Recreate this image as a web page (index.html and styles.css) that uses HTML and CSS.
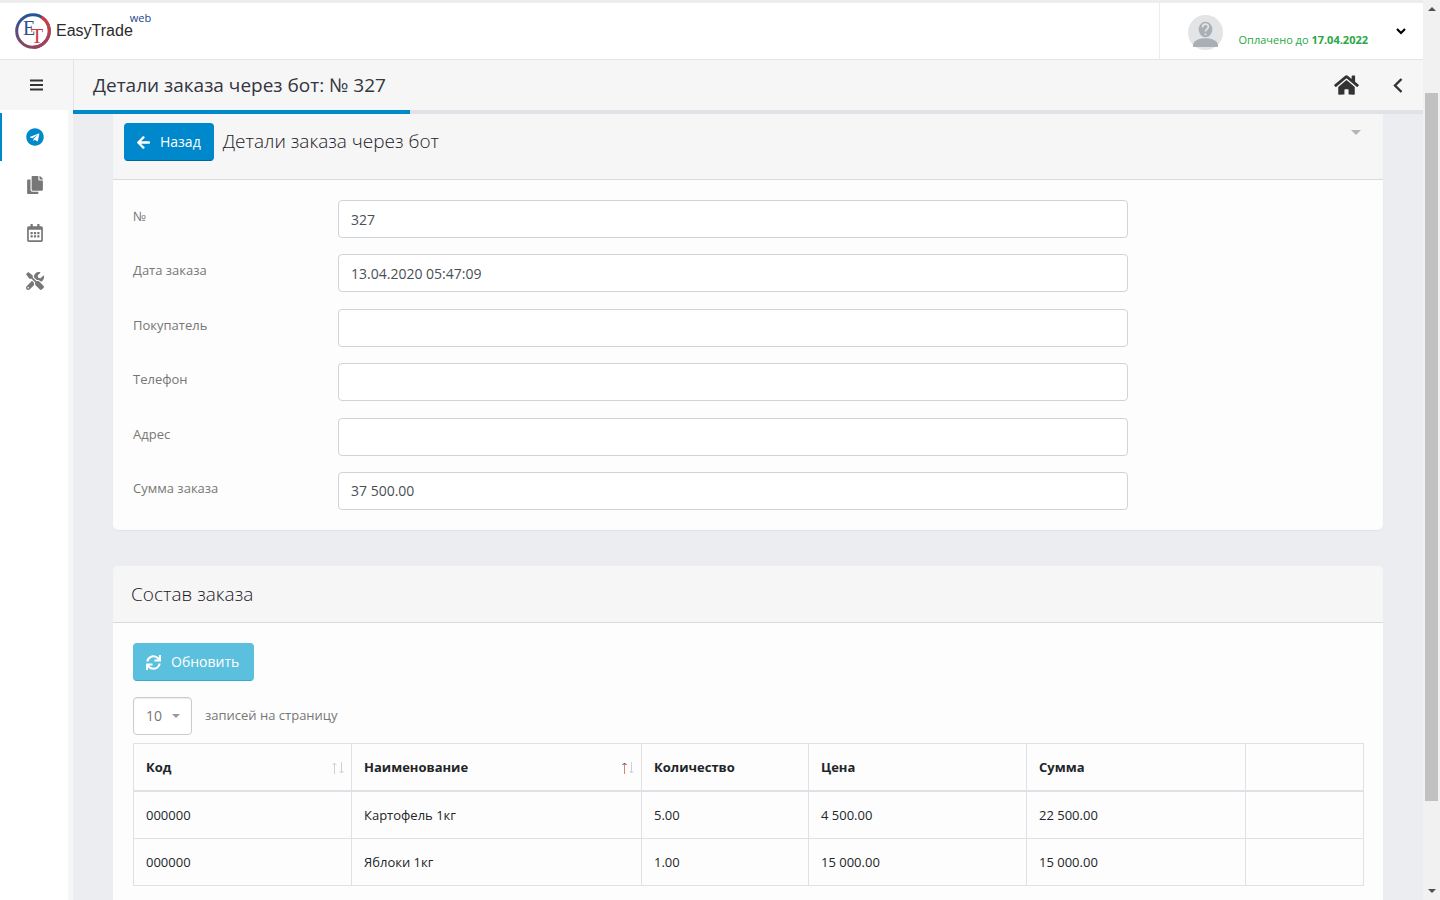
FILE: index.html
```html
<!DOCTYPE html>
<html lang="ru">
<head>
<meta charset="utf-8">
<title>EasyTrade web</title>
<link rel="stylesheet" href="styles.css">
</head>
<body>
<div class="app">
  <header class="topbar">
    <a class="logo" href="#">
      <svg class="logo-mark" viewBox="0 0 36 36" aria-hidden="true">
        <defs>
          <linearGradient id="ring" x1="0" y1="0" x2="0" y2="1">
            <stop offset="0" stop-color="#24549a"/>
            <stop offset="1" stop-color="#8c4560"/>
          </linearGradient>
          <linearGradient id="ringRed" x1="0" y1="0" x2="0" y2="1">
            <stop offset="0" stop-color="#d93b3b"/>
            <stop offset="1" stop-color="#94435c"/>
          </linearGradient>
        </defs>
        <circle cx="18" cy="18" r="16.300" fill="#fff" stroke="url(#ring)" stroke-width="3"/>
        <path d="M26.500 4.100A16.300 16.300 0 0 1 18 34.300" fill="none" stroke="url(#ringRed)" stroke-width="3"/>
        <text class="logo-e" x="8" y="22">E</text>
        <text class="logo-t" x="16" y="30">T</text>
      </svg>
      <span class="logo-name">EasyTrade</span>
      <span class="logo-web">web</span>
    </a>
    <div class="account">
      <svg class="avatar" viewBox="0 0 36 36" aria-hidden="true">
        <circle cx="18" cy="18" r="18" fill="#e2e4e6"/>
        <path d="M5 32C5 26.500 11 24 18 24s13 2.500 13 8q0 1-1 1H6q-1 0-1-1z" fill="#a9b0b5"/>
        <ellipse cx="18" cy="15" rx="7" ry="8" fill="#a9b0b5"/>
        <path d="M15 12.500c0-4 6-4 6-.5 0 2.500-3 2.500-3 5M18 19v1.500" fill="none" stroke="#e2e4e6" stroke-width="1.800"/>
      </svg>
      <span class="paid">Оплачено до <b>17.04.2022</b></span>
      <button class="icon-button account-toggle" aria-label="Меню пользователя">
        <svg viewBox="0 0 10 7" width="10" height="7"><path d="M1 1l4 4 4-4" fill="none" stroke="#000" stroke-width="2.200"/></svg>
      </button>
    </div>
  </header>

  <div class="pagehead">
    <button class="icon-button menu-toggle" aria-label="Меню">
      <svg viewBox="0 0 13 12" width="13" height="12"><path d="M0 1.500h13M0 6h13M0 10.500h13" stroke="#333" stroke-width="1.800"/></svg>
    </button>
    <div class="pagehead-main">
      <h1>Детали заказа через бот: № 327</h1>
      <a class="home" href="#" aria-label="Главная">
        <svg viewBox="0 0 576 512" width="25" height="22"><path d="M280.370 148.260L96 300.110V464a16 16 0 0 0 16 16l112.060-.290a16 16 0 0 0 15.920-16V368a16 16 0 0 1 16-16h64a16 16 0 0 1 16 16v95.640a16 16 0 0 0 16 16.050L464 480a16 16 0 0 0 16-16V300L295.670 148.260a12.190 12.190 0 0 0-15.300 0zM571.600 251.470L488 182.560V44.050a12 12 0 0 0-12-12h-56a12 12 0 0 0-12 12v72.610L318.470 43a48 48 0 0 0-61 0L4.340 251.470a12 12 0 0 0-1.600 16.900l25.500 31A12 12 0 0 0 45.150 301l235.220-193.740a12.190 12.190 0 0 1 15.300 0L530.900 301a12 12 0 0 0 16.900-1.600l25.500-31a12 12 0 0 0-1.700-16.930z"/></svg>
      </a>
      <button class="icon-button panel-toggle" aria-label="Открыть панель">
        <svg viewBox="0 0 10 16" width="10" height="16"><path d="M8.500 2L2 8.500 8.500 15" fill="none" stroke="#333" stroke-width="2.400"/></svg>
      </button>
    </div>
  </div>

  <div class="body">
    <nav class="sidebar" aria-label="Разделы">
      <a class="nav-item active" href="#" aria-label="Telegram">
        <svg viewBox="0 0 496 512" width="18" height="18"><path d="M248 8C111 8 0 119 0 256s111 248 248 248 248-111 248-248S385 8 248 8zm121.800 169.900l-40.700 191.800c-3 13.600-11.100 16.900-22.400 10.500l-62-45.700-29.900 28.800c-3.300 3.300-6.100 6.100-12.500 6.100l4.400-63.100 114.900-103.800c5-4.400-1.100-6.900-7.700-2.500l-142 89.400-61.200-19.100c-13.300-4.200-13.600-13.300 2.800-19.700l239.100-92.200c11.100-4 20.800 2.700 17.200 19.500z"/></svg>
      </a>
      <a class="nav-item" href="#" aria-label="Документы">
        <svg viewBox="0 0 448 512" width="16" height="18"><path d="M320 448v40c0 13.255-10.745 24-24 24H24c-13.255 0-24-10.745-24-24V120c0-13.255 10.745-24 24-24h72v296c0 30.879 25.121 56 56 56h168zm0-344V0H152c-13.255 0-24 10.745-24 24v368c0 13.255 10.745 24 24 24h272c13.255 0 24-10.745 24-24V128H344c-13.200 0-24-10.800-24-24zm120.971-31.029L375.029 7.029A24 24 0 0 0 358.059 0H352v96h96v-6.059a24 24 0 0 0-7.029-16.970z"/></svg>
      </a>
      <a class="nav-item" href="#" aria-label="Календарь">
        <svg viewBox="0 0 448 512" width="16" height="18"><path d="M148 288h-40c-6.600 0-12-5.400-12-12v-40c0-6.600 5.400-12 12-12h40c6.600 0 12 5.400 12 12v40c0 6.600-5.400 12-12 12zm108-12v-40c0-6.600-5.400-12-12-12h-40c-6.600 0-12 5.400-12 12v40c0 6.600 5.400 12 12 12h40c6.600 0 12-5.400 12-12zm96 0v-40c0-6.600-5.400-12-12-12h-40c-6.600 0-12 5.400-12 12v40c0 6.600 5.400 12 12 12h40c6.600 0 12-5.400 12-12zm-96 96v-40c0-6.600-5.400-12-12-12h-40c-6.600 0-12 5.400-12 12v40c0 6.600 5.400 12 12 12h40c6.600 0 12-5.400 12-12zm-96 0v-40c0-6.600-5.400-12-12-12h-40c-6.600 0-12 5.400-12 12v40c0 6.600 5.400 12 12 12h40c6.600 0 12-5.400 12-12zm192 0v-40c0-6.600-5.400-12-12-12h-40c-6.600 0-12 5.400-12 12v40c0 6.600 5.400 12 12 12h40c6.600 0 12-5.400 12-12zm96-260v352c0 26.500-21.500 48-48 48H48c-26.500 0-48-21.500-48-48V112c0-26.500 21.500-48 48-48h48V12c0-6.600 5.400-12 12-12h40c6.600 0 12 5.400 12 12v52h128V12c0-6.600 5.400-12 12-12h40c6.600 0 12 5.400 12 12v52h48c26.500 0 48 21.500 48 48zm-48 346V160H48v298c0 3.300 2.700 6 6 6h340c3.300 0 6-2.700 6-6z"/></svg>
      </a>
      <a class="nav-item" href="#" aria-label="Настройки">
        <svg viewBox="0 0 512 512" width="18" height="18"><path d="M501.100 395.700L384 278.600c-23.100-23.100-57.600-27.600-85.400-13.900L192 158.100V96L64 0 0 64l96 128h62.100l106.600 106.600c-13.600 27.800-9.200 62.300 13.900 85.400l117.100 117.100c14.600 14.600 38.200 14.600 52.700 0l52.700-52.700c14.500-14.600 14.500-38.200 0-52.700zM331.700 225c28.300 0 54.900 11 74.900 31l19.400 19.400c15.800-6.900 30.800-16.500 43.800-29.500 37.100-37.100 49.700-89.300 37.900-136.700-2.200-9-13.500-12.100-20.100-5.500l-74.400 74.400-67.900-11.300L334 98.900l74.400-74.400c6.600-6.600 3.400-17.900-5.700-20.200-47.400-11.700-99.600.9-136.600 37.900-28.500 28.500-41.900 66.100-41.200 103.600l82.100 82.100c8.100-1.900 16.500-2.900 24.700-2.900zm-103.900 82l-56.700-56.700L18.700 402.800c-25 25-25 65.500 0 90.500s65.500 25 90.500 0l123.600-123.600c-7.600-19.900-9.900-41.600-5-62.700zM64 472c-13.200 0-24-10.800-24-24 0-13.300 10.700-24 24-24s24 10.700 24 24c0 13.200-10.700 24-24 24z"/></svg>
      </a>
    </nav>

    <main class="content">
      <section class="card card-first">
        <div class="card-head card-head-tools">
          <button class="btn btn-primary">
            <svg viewBox="0 0 448 512" width="13" height="15"><path d="M257.500 445.100l-22.200 22.200c-9.400 9.400-24.600 9.400-33.900 0L7 273c-9.400-9.400-9.400-24.600 0-33.900L201.400 44.700c9.400-9.400 24.600-9.400 33.900 0l22.200 22.200c9.500 9.500 9.300 25-.4 34.300L136.600 216H424c13.300 0 24 10.700 24 24v32c0 13.300-10.700 24-24 24H136.600l120.500 114.800c9.800 9.300 10 24.800.4 34.300z"/></svg>
            Назад
          </button>
          <h2>Детали заказа через бот</h2>
          <button class="icon-button collapse" aria-label="Свернуть"><span class="caret caret-light"></span></button>
        </div>
        <form class="order">
          <div class="field"><label for="num">№</label><input id="num" value="327"></div>
          <div class="field"><label for="date">Дата заказа</label><input id="date" value="13.04.2020 05:47:09"></div>
          <div class="field"><label for="buyer">Покупатель</label><input id="buyer"></div>
          <div class="field"><label for="phone">Телефон</label><input id="phone"></div>
          <div class="field"><label for="address">Адрес</label><input id="address"></div>
          <div class="field"><label for="sum">Сумма заказа</label><input id="sum" value="37 500.00"></div>
        </form>
      </section>

      <section class="card card-items">
        <div class="card-head"><h2>Состав заказа</h2></div>
        <div class="card-body">
          <button class="btn btn-info">
            <svg viewBox="0 0 512 512" width="15" height="15"><path d="M440.650 12.570l4 82.770A247.160 247.160 0 0 0 255.830 8C134.730 8 33.910 94.920 12.290 209.820A12 12 0 0 0 24.090 224h49.050a12 12 0 0 0 11.670-9.260 175.910 175.910 0 0 1 317-56.940l-101.460-4.860a12 12 0 0 0-12.570 12v47.410a12 12 0 0 0 12 12H500a12 12 0 0 0 12-12V12a12 12 0 0 0-12-12h-47.370a12 12 0 0 0-11.980 12.570zM255.830 432a175.610 175.610 0 0 1-146-77.800l101.800 4.870a12 12 0 0 0 12.570-12v-47.400a12 12 0 0 0-12-12H12a12 12 0 0 0-12 12V500a12 12 0 0 0 12 12h47.350a12 12 0 0 0 12-12.600l-4.150-82.570A247.170 247.170 0 0 0 255.830 504c121.110 0 221.930-86.920 243.550-201.820a12 12 0 0 0-11.800-14.180h-49.050a12 12 0 0 0-11.670 9.260A175.860 175.860 0 0 1 255.830 432z"/></svg>
            Обновить
          </button>
          <div class="length">
            <span class="select-wrap">
              <select id="length"><option>10</option><option>25</option></select>
              <span class="caret caret-select"></span>
            </span>
            <label for="length">записей на страницу</label>
          </div>
          <table class="items">
            <colgroup><col class="c-code"><col class="c-name"><col class="c-qty"><col class="c-price"><col class="c-sum"><col class="c-act"></colgroup>
            <thead>
              <tr>
                <th><div class="sortable">Код
                  <svg class="sort" viewBox="0 0 12 12" width="12" height="12" fill="none"><path d="M2.500 12V1M.5 3l2-2 2 2M9.500 0v11M7.500 9l2 2 2-2" stroke="#d0d0d2"/></svg></div></th>
                <th><div class="sortable">Наименование
                  <svg class="sort" viewBox="0 0 12 12" width="12" height="12" fill="none"><path d="M9.500 0v11M7.500 9l2 2 2-2" stroke="#d0d0d2"/><path d="M2.500 12V1" stroke="#dd8078"/><path d="M.5 3l2-2 2 2" stroke="#55333a"/></svg></div></th>
                <th>Количество</th><th>Цена</th><th>Сумма</th><th></th>
              </tr>
            </thead>
            <tbody>
              <tr><td>000000</td><td>Картофель 1кг</td><td>5.00</td><td>4 500.00</td><td>22 500.00</td><td></td></tr>
              <tr><td>000000</td><td>Яблоки 1кг</td><td>1.00</td><td>15 000.00</td><td>15 000.00</td><td></td></tr>
            </tbody>
          </table>
        </div>
      </section>
    </main>
  </div>
</div>
<div class="scrollbar" aria-hidden="true">
  <span class="arrow arrow-up"></span>
  <div class="track"><div class="thumb"></div></div>
  <span class="arrow arrow-down"></span>
</div>
</body>
</html>
```
FILE: styles.css
```css
* { box-sizing: border-box; }

body {
  margin: 0;
  height: 100vh;
  display: flex;
  overflow: hidden;
  background: #ecedf0;
  font: 13px/22px "Open Sans", "Noto Sans", sans-serif;
  color: #777;
}

h1, h2 { margin: 0; font-weight: 400; }
svg { display: block; flex: none; }
a { color: inherit; text-decoration: none; }
button, input, select { font: inherit; color: inherit; }

.icon-button {
  display: flex;
  align-items: center;
  justify-content: center;
  padding: 0;
  border: 0;
  background: none;
}

.app {
  flex: 1;
  min-width: 0;
  display: flex;
  flex-direction: column;
}

/* Top bar */
.topbar {
  flex: none;
  height: 60px;
  display: flex;
  justify-content: space-between;
  border-top: 3px solid #ededed;
  border-bottom: 1px solid #e4e4e6;
  background: #fff;
}

.logo { display: flex; padding: 10px 15px; }
.logo-mark { width: 36px; height: 36px; }
.logo-e, .logo-t { font-family: "Liberation Serif", serif; font-size: 20px; }
.logo-e { fill: #2a5290; }
.logo-t { fill: #cc3a40; }
.logo-name {
  padding: 8px 0 0 5px;
  font: 16px/20px "Liberation Sans", Arial, sans-serif;
  color: #2b2b2b;
}
.logo-web {
  margin: -5px 0 0 -3px;
  font-size: 11px;
  line-height: 20px;
  color: #1c4587;
}

.account {
  display: flex;
  align-items: center;
  padding: 0 17px 0 28px;
  border-left: 1px solid #ececec;
}
.avatar { width: 35px; height: 35px; margin-top: 2px; }
.paid { padding: 18px 28px 0 16px; font-size: 11px; line-height: 20px; color: #28a745; }
.account-toggle { width: 10px; }

/* Page header */
.pagehead {
  flex: none;
  height: 50px;
  display: flex;
  background: #f6f6f6;
}
.menu-toggle { width: 73px; }
.pagehead-main {
  flex: 1;
  display: flex;
  align-items: center;
  padding: 0 20px 0 19px;
  border-left: 1px solid #e4e4e6;
}
.pagehead-main h1 { flex: 1; font-size: 19px; line-height: 28px; color: #33353f; }
.home { margin-right: 34px; fill: #333; }

/* Sidebar and content */
.body { flex: 1; min-height: 0; display: flex; }
.sidebar {
  flex: none;
  width: 73px;
  padding-top: 3px;
  border-right: 5px solid #f6f6f6;
  background: #fff;
}
.nav-item {
  height: 48px;
  display: flex;
  align-items: center;
  justify-content: center;
  border-left: 2px solid transparent;
  fill: #777;
}
.nav-item.active { border-color: #08c; fill: #08c; }

.content {
  flex: 1;
  min-width: 0;
  padding: 0 40px;
  border-top: 4px solid;
  border-image: linear-gradient(to right, #08c 25%, #e1e2e7 25%) 4 0 0 0;
}

/* Cards */
.card { border-radius: 5px; background: #fdfdfd; overflow: hidden; }
.card-first {
  margin-bottom: 36px;
  border-radius: 0 0 5px 5px;
  box-shadow: 0 1px 1px rgba(0, 0, 0, 0.05);
}
.card-head {
  padding: 14px 18px;
  border-bottom: 1px solid #dadada;
  background: #f6f6f6;
}
.card-head h2 { font-size: 19px; font-weight: 300; line-height: 28px; color: #1d2127; }
.card-head-tools {
  display: flex;
  align-items: flex-start;
  padding: 9px 20px 18px 11px;
}
.card-head-tools h2 { flex: 1; padding: 4px 0 0 9px; }
.collapse { width: 14px; height: 18px; }

.caret {
  width: 0;
  height: 0;
  border: 4px solid transparent;
  border-bottom: 0;
  border-top-color: #999;
}
.caret-light { border-width: 5px 5px 0; border-top-color: #b4b4b4; }

.btn {
  display: inline-flex;
  align-items: center;
  height: 38px;
  padding: 0 12px;
  border: 1px solid;
  border-radius: 4px;
  color: #fff;
  fill: #fff;
  font-size: 14px;
}
.btn svg { margin-right: 10px; }
.btn-primary { border-color: #08c #08c #006699; background: #08c; }
.btn-info { padding-right: 14px; border-color: #5bc0de #5bc0de #2faed4; background: #5bc0de; }

/* Order form */
.order {
  min-height: 350px;
  display: flex;
  flex-direction: column;
  justify-content: space-between;
  padding: 20px;
}
.field { display: grid; grid-template-columns: 205fr 790fr 235fr; }
.field label { padding-top: 5px; }
.field input {
  min-width: 0;
  height: 38px;
  padding: 0 12px;
  border: 1px solid #ced4da;
  border-radius: 4px;
  background: #fff;
  font-size: 14px;
  color: #495057;
}

/* Order items */
.card-items { border-radius: 5px 5px 0 0; }
.card-body { padding: 20px 20px 40px; }
.length { display: flex; align-items: flex-start; gap: 13px; margin: 16px 0 8px; }
.length label { padding-top: 7px; }
.select-wrap { position: relative; }
.length select {
  display: block;
  width: 59px;
  height: 38px;
  padding: 0 12px;
  border: 1px solid #ccc;
  border-radius: 4px;
  background: #fff;
  box-shadow: inset 0 1px 1px rgba(0, 0, 0, 0.08);
  font-size: 14px;
  appearance: none;
}
.caret-select { position: absolute; top: 17px; right: 12px; pointer-events: none; }

.items {
  width: 100%;
  table-layout: fixed;
  border-collapse: collapse;
  color: #212529;
}
.c-code, .c-price { width: 218px; }
.c-name { width: 290px; }
.c-qty { width: 167px; }
.c-sum { width: 219px; }
.c-act { width: 118px; }
.items th, .items td { padding: 12px; border: 1px solid #dee2e6; text-align: left; }
.items th { border-bottom-width: 2px; font-weight: 700; }
.sortable { display: flex; align-items: center; justify-content: space-between; }
.sort { margin: 2px -5px 0 0; }

/* Scroll bar */
.scrollbar {
  flex: none;
  width: 17px;
  display: flex;
  flex-direction: column;
  align-items: center;
  padding: 7px 0;
  background: #f1f1f1;
}
.track { flex: 1; width: 13px; padding-top: 82px; }
.thumb { height: 89%; background: #c1c1c1; }
.arrow { border: 4px solid transparent; }
.arrow-up { border-top: 0; border-bottom-color: #505050; }
.arrow-down { border-bottom: 0; border-top-color: #505050; }
```
